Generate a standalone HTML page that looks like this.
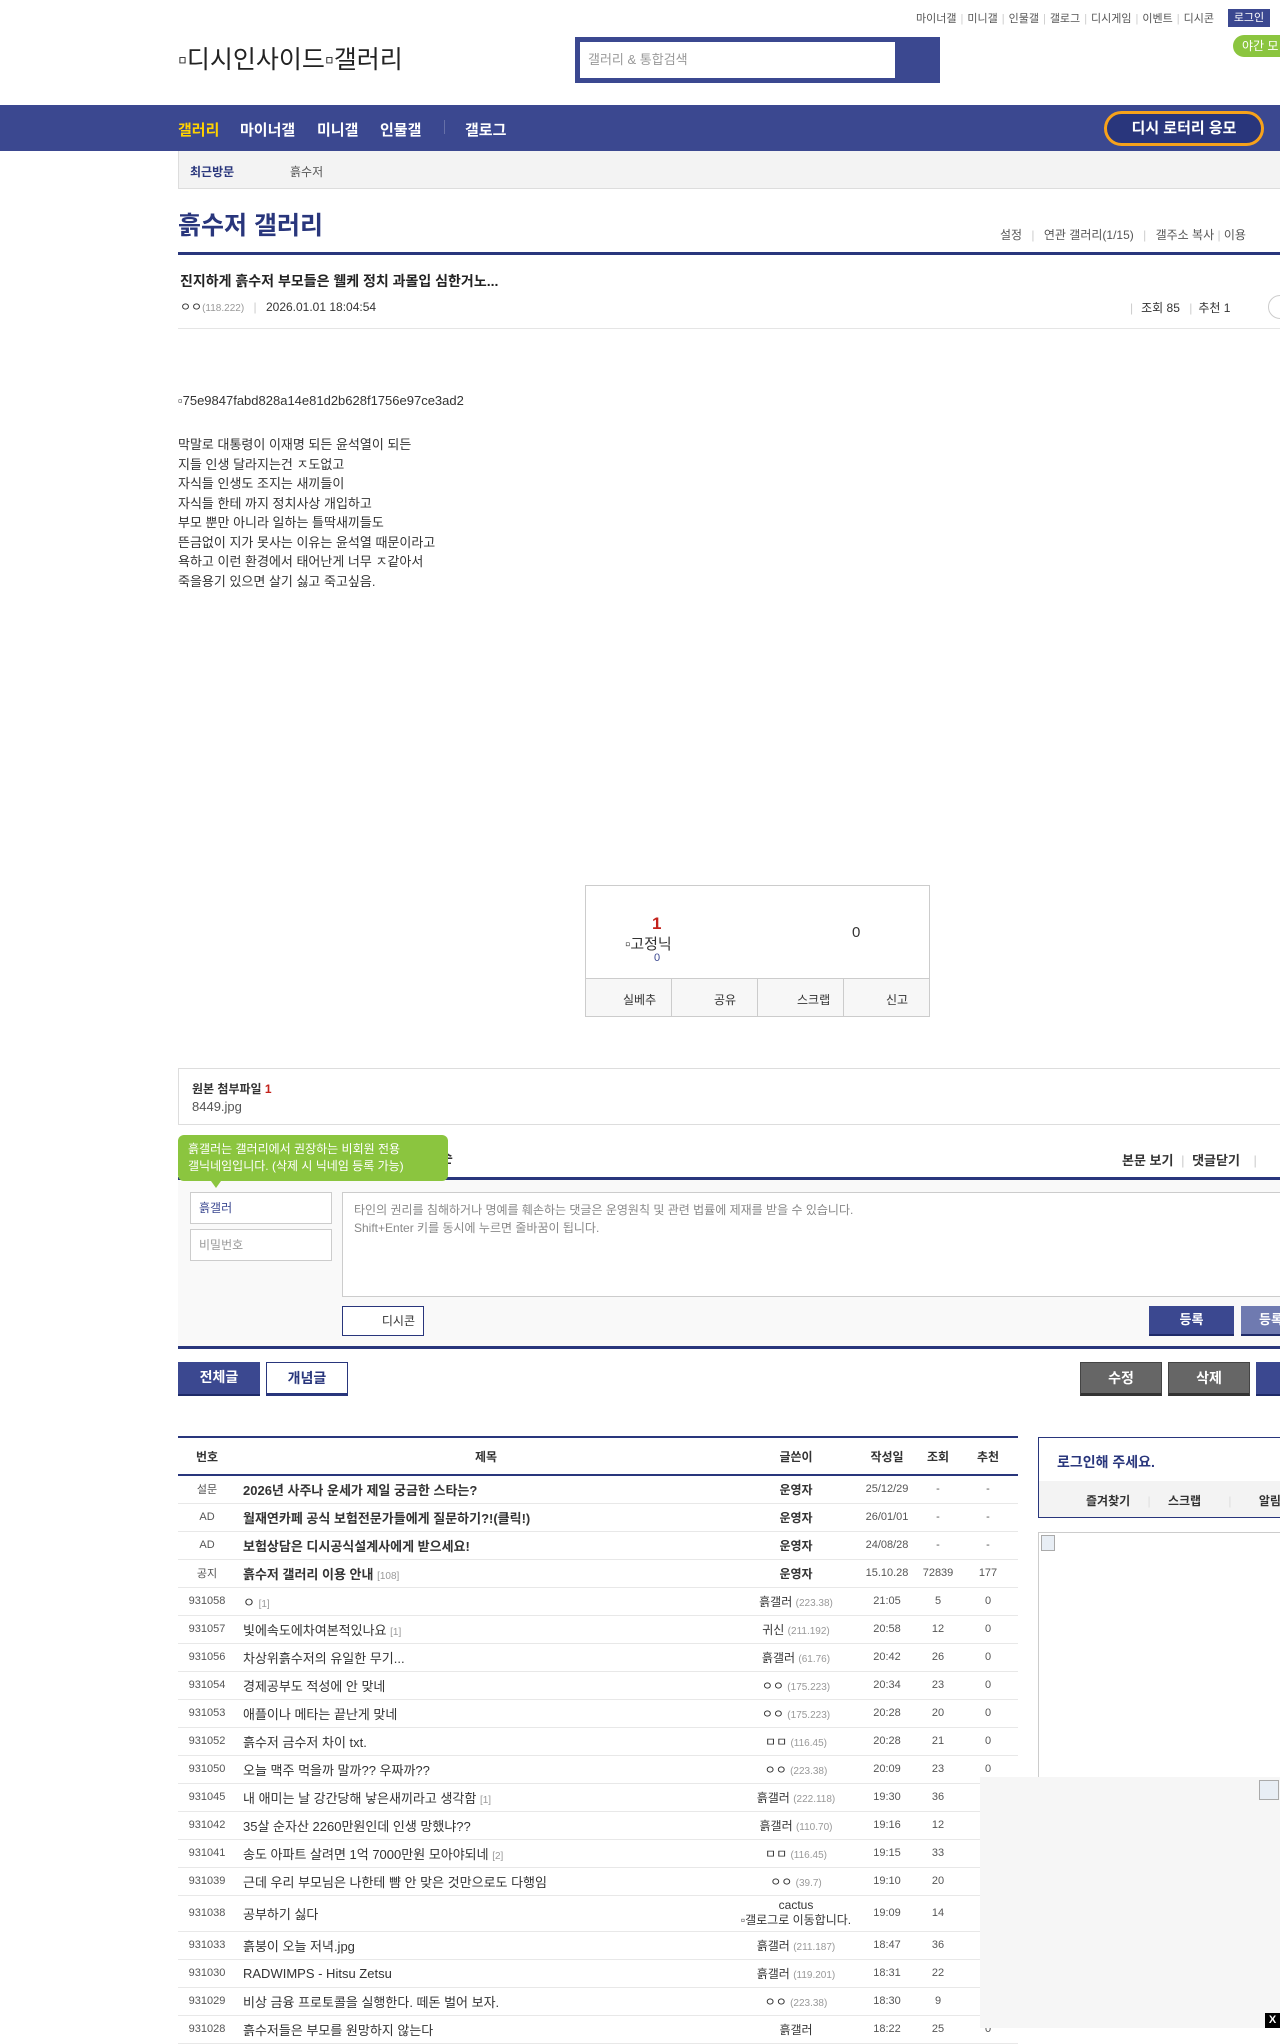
<!DOCTYPE html>
<html><head><meta charset="utf-8">
<style>
*{margin:0;padding:0;box-sizing:border-box}
body{width:1280px;height:2028px;overflow:hidden;position:relative;background:#fff;font-family:"Liberation Sans","Noto Sans CJK KR",sans-serif;color:#333;font-size:13px}
.a{position:absolute;white-space:nowrap}
.navy{color:#29367c}
.toplinks{top:10px;right:66px;font-size:11px;color:#555}
.toplinks span.sep{color:#ccc;margin:0 4px}
.btnb{position:absolute;background:#3b4890;color:#fff;font-weight:bold;text-align:center;border-bottom:2px solid #1e2a68}
table{border-collapse:collapse}
.tb{position:absolute;left:178px;top:1436px;width:840px;border-top:2px solid #29367c;font-size:12px}
.tb td,.tb th{height:28px;border-bottom:1px solid #e8e8e8;text-align:center;white-space:nowrap}
.tb th{height:38px;border-bottom:2px solid #29367c;font-weight:bold;color:#333}
.tb td.t{text-align:left;padding-left:7px;font-size:13px}
.tb td.n{font-size:11px;color:#555}
.ip{color:#999;font-size:10px}
.rc{color:#999;font-size:10px}
b{font-weight:bold}
</style></head><body>

<div class="a toplinks">마이너갤<span class="sep">|</span>미니갤<span class="sep">|</span>인물갤<span class="sep">|</span>갤로그<span class="sep">|</span>디시게임<span class="sep">|</span>이벤트<span class="sep">|</span>디시콘</div>
<div class="a" style="left:1228px;top:9px;width:42px;height:18px;background:#3b4890;color:#fff;font-size:11px;text-align:center;line-height:18px">로그인</div>
<div class="a" style="left:1233px;top:35px;width:60px;height:22px;background:#8bc53f;color:#fff;font-size:12px;border-radius:11px;line-height:22px;padding-left:9px">야간 모</div>

<div class="a" style="left:178px;top:40px;font-size:25px;color:#222">▫디시인사이드▫갤러리</div>
<div class="a" style="left:575px;top:37px;width:365px;height:46px;background:#3b4890"></div>
<div class="a" style="left:580px;top:42px;width:315px;height:36px;background:#fff;font-size:13px;color:#999;line-height:36px;padding-left:8px">갤러리 &amp; 통합검색</div>

<div class="a" style="left:0;top:105px;width:1280px;height:46px;background:#3b4890"></div>
<div class="a" style="left:178px;top:119px;font-size:15px;font-weight:bold;color:#ffd200">갤러리</div>
<div class="a" style="left:240px;top:119px;font-size:15px;font-weight:bold;color:#fff">마이너갤</div>
<div class="a" style="left:317px;top:119px;font-size:15px;font-weight:bold;color:#fff">미니갤</div>
<div class="a" style="left:380px;top:119px;font-size:15px;font-weight:bold;color:#fff">인물갤</div>
<div class="a" style="left:444px;top:120px;width:1px;height:14px;background:#6670a8"></div>
<div class="a" style="left:465px;top:119px;font-size:15px;font-weight:bold;color:#fff">갤로그</div>
<div class="a" style="left:1104px;top:111px;width:160px;height:35px;border:3px solid #f7a21b;border-radius:18px;background:#29367c;color:#fff;font-size:15px;font-weight:bold;text-align:center;line-height:29px">디시 로터리 응모</div>

<div class="a" style="left:178px;top:151px;width:1110px;height:38px;background:#f3f3f3;border:1px solid #ddd;border-top:0"></div>
<div class="a navy" style="left:190px;top:163px;font-size:12px;font-weight:bold">최근방문</div>
<div class="a" style="left:290px;top:163px;font-size:12px;color:#555">흙수저</div>

<div class="a navy" style="left:178px;top:206px;font-size:25px;font-weight:bold">흙수저 갤러리</div>
<div class="a" style="left:1000px;top:226px;font-size:12px;color:#555">설정 <span style="color:#ccc;margin:0 6px">|</span> 연관 갤러리(1/15) <span style="color:#ccc;margin:0 6px">|</span> 갤주소 복사 <span style="color:#ccc">|</span> 이용</div>
<div class="a" style="left:178px;top:252px;width:1110px;height:3px;background:#29367c"></div>

<div class="a" style="left:180px;top:271px;font-size:14px;font-weight:bold;color:#222">진지하게 흙수저 부모들은 웰케 정치 과몰입 심한거노...</div>
<div class="a" style="left:180px;top:298px;font-size:12px;color:#333">ㅇㅇ<span class="ip">(118.222)</span> <span style="color:#ccc;margin:0 6px">|</span> 2026.01.01 18:04:54</div>
<div class="a" style="left:1130px;top:299px;font-size:12px;color:#333"><span style="color:#ccc;margin-right:8px">|</span>조회 85 <span style="color:#ccc;margin:0 6px">|</span>추천 1</div>
<div class="a" style="left:1268px;top:295px;width:24px;height:24px;border:1px solid #ccc;border-radius:12px"></div>
<div class="a" style="left:178px;top:328px;width:1110px;height:1px;background:#e5e5e5"></div>

<div class="a" style="left:178px;top:393px;font-size:13px;color:#333">▫75e9847fabd828a14e81d2b628f1756e97ce3ad2</div>
<div class="a" style="left:178px;top:435px;font-size:13px;line-height:19.5px;color:#333;white-space:pre">막말로 대통령이 이재명 되든 윤석열이 되든
지들 인생 달라지는건 ㅈ도없고
자식들 인생도 조지는 새끼들이
자식들 한테 까지 정치사상 개입하고
부모 뿐만 아니라 일하는 틀딱새끼들도
뜬금없이 지가 못사는 이유는 윤석열 때문이라고
욕하고 이런 환경에서 태어난게 너무 ㅈ같아서
죽을용기 있으면 살기 싫고 죽고싶음.</div>

<div class="a" style="left:585px;top:885px;width:345px;height:132px;border:1px solid #ccc"></div>
<div class="a" style="left:652px;top:914px;font-size:17px;font-weight:bold;color:#c3211b">1</div>
<div class="a" style="left:625px;top:933px;font-size:15px;color:#333">▫고정닉</div>
<div class="a" style="left:654px;top:952px;font-size:11px;color:#3b4890">0</div>
<div class="a" style="left:852px;top:924px;font-size:15px;color:#333">0</div>
<div class="a" style="left:586px;top:978px;width:343px;height:38px;background:#f7f7f7;border-top:1px solid #ccc"></div>
<div class="a" style="left:671px;top:979px;width:1px;height:37px;background:#ccc"></div>
<div class="a" style="left:757px;top:979px;width:1px;height:37px;background:#ccc"></div>
<div class="a" style="left:843px;top:979px;width:1px;height:37px;background:#ccc"></div>
<div class="a" style="left:623px;top:991px;font-size:12px">실베추</div>
<div class="a" style="left:714px;top:991px;font-size:12px">공유</div>
<div class="a" style="left:797px;top:991px;font-size:12px">스크랩</div>
<div class="a" style="left:886px;top:991px;font-size:12px">신고</div>

<div class="a" style="left:178px;top:1068px;width:1110px;height:57px;border:1px solid #ddd"></div>
<div class="a" style="left:192px;top:1080px;font-size:12px;font-weight:bold;color:#333">원본 첨부파일 <span style="color:#c3211b">1</span></div>
<div class="a" style="left:192px;top:1099px;font-size:13px;color:#555">8449.jpg</div>

<div class="a" style="left:1122px;top:1150px;font-size:13px;font-weight:bold;color:#333">본문 보기 <span style="color:#ccc;font-weight:normal;margin:0 4px">|</span> 댓글닫기 <span style="color:#ccc;font-weight:normal;margin-left:10px">|</span></div>
<div class="a" style="left:440px;top:1148px;font-size:14px;font-weight:bold">순</div>
<div class="a" style="left:178px;top:1177px;width:1110px;height:3px;background:#29367c"></div>
<div class="a" style="left:178px;top:1180px;width:1110px;height:167px;background:#f9f9f9"></div>
<div class="a" style="left:178px;top:1135px;width:270px;height:46px;background:#8bc53f;border-radius:6px;color:#fff;font-size:12px;line-height:17px;padding:6px 10px">흙갤러는 갤러리에서 권장하는 비회원 전용<br>갤닉네임입니다. (삭제 시 닉네임 등록 가능)</div>
<div class="a" style="left:211px;top:1181px;width:0;height:0;border-left:5px solid transparent;border-right:5px solid transparent;border-top:7px solid #8bc53f"></div>
<div class="a" style="left:190px;top:1192px;width:142px;height:32px;background:#fff;border:1px solid #ccc;font-size:12px;color:#3b4890;line-height:30px;padding-left:8px">흙갤러</div>
<div class="a" style="left:190px;top:1229px;width:142px;height:32px;background:#fff;border:1px solid #ccc;font-size:12px;color:#999;line-height:30px;padding-left:8px">비밀번호</div>
<div class="a" style="left:342px;top:1192px;width:950px;height:105px;background:#fff;border:1px solid #ccc;font-size:12px;color:#888;line-height:18px;padding:8px 11px;white-space:pre">타인의 권리를 침해하거나 명예를 훼손하는 댓글은 운영원칙 및 관련 법률에 제재를 받을 수 있습니다.
Shift+Enter 키를 동시에 누르면 줄바꿈이 됩니다.</div>
<div class="a" style="left:342px;top:1306px;width:82px;height:30px;background:#fff;border:1px solid #29367c;font-size:12px;color:#333;line-height:28px;text-align:right;padding-right:8px">디시콘</div>
<div class="btnb" style="left:1149px;top:1306px;width:85px;height:30px;line-height:28px;font-size:13px">등록</div>
<div class="btnb" style="left:1241px;top:1306px;width:60px;height:30px;line-height:28px;font-size:13px;background:#6f7ab0">등록</div>
<div class="a" style="left:178px;top:1346px;width:1110px;height:3px;background:#29367c"></div>

<div class="btnb" style="left:178px;top:1362px;width:82px;height:34px;line-height:31px;font-size:14px">전체글</div>
<div class="a" style="left:266px;top:1362px;width:82px;height:34px;border:1px solid #29367c;border-bottom:3px solid #29367c;color:#29367c;font-weight:bold;font-size:14px;text-align:center;line-height:30px">개념글</div>
<div class="a" style="left:1080px;top:1362px;width:82px;height:34px;background:#666;border:1px solid #444;border-bottom:3px solid #333;color:#fff;font-weight:bold;font-size:14px;text-align:center;line-height:30px">수정</div>
<div class="a" style="left:1168px;top:1362px;width:82px;height:34px;background:#666;border:1px solid #444;border-bottom:3px solid #333;color:#fff;font-weight:bold;font-size:14px;text-align:center;line-height:30px">삭제</div>
<div class="btnb" style="left:1256px;top:1362px;width:60px;height:34px;line-height:31px;font-size:14px">글</div>

<table class="tb">
<tr><th style="width:58px">번호</th><th>제목</th><th style="width:120px">글쓴이</th><th style="width:62px">작성일</th><th style="width:40px">조회</th><th style="width:60px">추천</th></tr>
<tr><td class="n">설문</td><td class="t"><b>2026년 사주나 운세가 제일 궁금한 스타는?</b></td><td><b>운영자</b></td><td class="n">25/12/29</td><td class="n">-</td><td class="n">-</td></tr>
<tr><td class="n">AD</td><td class="t"><b>월재연카페 공식 보험전문가들에게 질문하기?!(클릭!)</b></td><td><b>운영자</b></td><td class="n">26/01/01</td><td class="n">-</td><td class="n">-</td></tr>
<tr><td class="n">AD</td><td class="t"><b>보험상담은 디시공식설계사에게 받으세요!</b></td><td><b>운영자</b></td><td class="n">24/08/28</td><td class="n">-</td><td class="n">-</td></tr>
<tr><td class="n">공지</td><td class="t"><b>흙수저 갤러리 이용 안내</b> <span class="rc">[108]</span></td><td><b>운영자</b></td><td class="n">15.10.28</td><td class="n">72839</td><td class="n">177</td></tr>
<tr><td class="n">931058</td><td class="t">ㅇ <span class="rc">[1]</span></td><td>흙갤러 <span class="ip">(223.38)</span></td><td class="n">21:05</td><td class="n">5</td><td class="n">0</td></tr>
<tr><td class="n">931057</td><td class="t">빛에속도에차여본적있나요 <span class="rc">[1]</span></td><td>귀신 <span class="ip">(211.192)</span></td><td class="n">20:58</td><td class="n">12</td><td class="n">0</td></tr>
<tr><td class="n">931056</td><td class="t">차상위흙수저의 유일한 무기...</td><td>흙갤러 <span class="ip">(61.76)</span></td><td class="n">20:42</td><td class="n">26</td><td class="n">0</td></tr>
<tr><td class="n">931054</td><td class="t">경제공부도 적성에 안 맞네</td><td>ㅇㅇ <span class="ip">(175.223)</span></td><td class="n">20:34</td><td class="n">23</td><td class="n">0</td></tr>
<tr><td class="n">931053</td><td class="t">애플이나 메타는 끝난게 맞네</td><td>ㅇㅇ <span class="ip">(175.223)</span></td><td class="n">20:28</td><td class="n">20</td><td class="n">0</td></tr>
<tr><td class="n">931052</td><td class="t">흙수저 금수저 차이 txt.</td><td>ㅁㅁ <span class="ip">(116.45)</span></td><td class="n">20:28</td><td class="n">21</td><td class="n">0</td></tr>
<tr><td class="n">931050</td><td class="t">오늘 맥주 먹을까 말까?? 우짜까??</td><td>ㅇㅇ <span class="ip">(223.38)</span></td><td class="n">20:09</td><td class="n">23</td><td class="n">0</td></tr>
<tr><td class="n">931045</td><td class="t">내 애미는 날 강간당해 낳은새끼라고 생각함 <span class="rc">[1]</span></td><td>흙갤러 <span class="ip">(222.118)</span></td><td class="n">19:30</td><td class="n">36</td><td class="n">0</td></tr>
<tr><td class="n">931042</td><td class="t">35살 순자산 2260만원인데 인생 망했냐??</td><td>흙갤러 <span class="ip">(110.70)</span></td><td class="n">19:16</td><td class="n">12</td><td class="n">0</td></tr>
<tr><td class="n">931041</td><td class="t">송도 아파트 살려면 1억 7000만원 모아야되네 <span class="rc">[2]</span></td><td>ㅁㅁ <span class="ip">(116.45)</span></td><td class="n">19:15</td><td class="n">33</td><td class="n">0</td></tr>
<tr><td class="n">931039</td><td class="t">근데 우리 부모님은 나한테 뺨 안 맞은 것만으로도 다행임</td><td>ㅇㅇ <span class="ip">(39.7)</span></td><td class="n">19:10</td><td class="n">20</td><td class="n">0</td></tr>
<tr><td class="n" style="height:36px">931038</td><td class="t">공부하기 싫다</td><td style="line-height:15px">cactus<br>▫갤로그로 이동합니다.</td><td class="n">19:09</td><td class="n">14</td><td class="n">0</td></tr>
<tr><td class="n">931033</td><td class="t">흙붕이 오늘 저녁.jpg</td><td>흙갤러 <span class="ip">(211.187)</span></td><td class="n">18:47</td><td class="n">36</td><td class="n">0</td></tr>
<tr><td class="n">931030</td><td class="t">RADWIMPS - Hitsu Zetsu</td><td>흙갤러 <span class="ip">(119.201)</span></td><td class="n">18:31</td><td class="n">22</td><td class="n">0</td></tr>
<tr><td class="n">931029</td><td class="t">비상 금융 프로토콜을 실행한다. 떼돈 벌어 보자.</td><td>ㅇㅇ <span class="ip">(223.38)</span></td><td class="n">18:30</td><td class="n">9</td><td class="n">0</td></tr>
<tr><td class="n">931028</td><td class="t">흙수저들은 부모를 원망하지 않는다</td><td>흙갤러</td><td class="n">18:22</td><td class="n">25</td><td class="n">0</td></tr>
</table>

<div class="a" style="left:1038px;top:1437px;width:260px;height:81px;border:1px solid #29367c"></div>
<div class="a navy" style="left:1057px;top:1452px;font-size:14px;font-weight:bold">로그인해 주세요.</div>
<div class="a" style="left:1039px;top:1481px;width:250px;height:36px;background:#f3f3f3"></div>
<div class="a" style="left:1086px;top:1492px;font-size:12px;font-weight:bold;color:#333">즐겨찾기 <span style="color:#ddd;margin:0 14px;font-weight:normal">|</span> 스크랩 <span style="color:#ddd;margin:0 24px;font-weight:normal">|</span> 알림</div>
<div class="a" style="left:1038px;top:1532px;width:260px;height:260px;border:1px solid #ccc;border-bottom:0"></div>
<div class="a" style="left:1041px;top:1535px;width:14px;height:16px;border:1px solid #aaa;background:#e8eef5"></div>

<div class="a" style="left:980px;top:1777px;width:300px;height:251px;background:#f6f6f6"></div>
<div class="a" style="left:1259px;top:1780px;width:20px;height:20px;border:1px solid #aaa;background:#e8eef5"></div>
<div class="a" style="left:1265px;top:2013px;width:15px;height:15px;background:#000;color:#fff;font-size:11px;font-weight:bold;text-align:center;line-height:15px">X</div>
</body></html>
